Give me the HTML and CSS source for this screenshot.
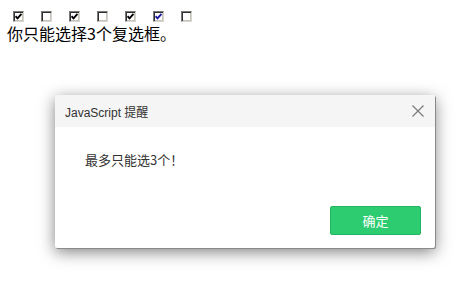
FILE: index.html
```html
<!DOCTYPE html>
<html lang="zh">
<head>
<meta charset="utf-8">
<link rel="stylesheet" href="styles.css">
</head>
<body>
<div class="boxes">
  <span class="cb"><svg viewBox="0 0 7 7" width="7" height="7"><polyline points="0.5,3.2 2.5,5.3 6.5,1" /></svg></span>
  <span class="cb"></span>
  <span class="cb"><svg viewBox="0 0 7 7" width="7" height="7"><polyline points="0.5,3.2 2.5,5.3 6.5,1" /></svg></span>
  <span class="cb"></span>
  <span class="cb"><svg viewBox="0 0 7 7" width="7" height="7"><polyline points="0.5,3.2 2.5,5.3 6.5,1" /></svg></span>
  <span class="cb blue"><svg viewBox="0 0 7 7" width="7" height="7"><polyline points="0.5,3.2 2.5,5.3 6.5,1" /></svg></span>
  <span class="cb"></span>
</div>
<div class="hint">你只能选择3个复选框。</div>

<div class="dialog">
  <div class="dlg-head">
    <span class="dlg-title">JavaScript 提醒</span>
    <svg class="dlg-close" viewBox="0 0 12 12" width="12" height="12"><path d="M0.5 0.5 L11.5 11.5 M11.5 0.5 L0.5 11.5"/></svg>
  </div>
  <div class="dlg-body">最多只能选3个！</div>
  <div class="dlg-foot"><button class="ok">确定</button></div>
</div>
</body>
</html>
```
FILE: styles.css
```css
html, body { margin: 0; padding: 0; background: #fff; }
body {
  padding: 8px;
  font-family: "Noto Sans CJK SC", "Noto Sans", sans-serif;
  color: #000;
  width: 472px;
  height: 287px;
  box-sizing: border-box;
  position: relative;
  overflow: hidden;
}
.boxes {
  display: flex;
  gap: 17px;
  padding-left: 5px;
  padding-top: 3px;
  height: 12px;
}
.cb {
  width: 11px;
  height: 11px;
  box-sizing: border-box;
  border-style: solid;
  border-width: 1px;
  border-color: #7a7a7a #d8d5ce #d8d5ce #7a7a7a;
  box-shadow: inset 1px 1px 0 #303030, inset -1px -1px 0 #c8c4bc;
  background: #fff;
  display: flex;
  align-items: center;
  justify-content: center;
}
.cb svg { display: block; fill: none; stroke: #000; stroke-width: 1.9; }
.cb.blue svg { stroke: #1a1a9c; }
.hint {
  font-size: 16px;
  line-height: 18px;
  margin-top: 1px;
  margin-left: -1px;
}
.dialog {
  position: absolute;
  left: 55px;
  top: 95px;
  width: 380px;
  height: 153px;
  background: #fff;
  border-radius: 2px;
  box-shadow: 1px 1px 0 #8a8a8a, 0 4px 16px rgba(0,0,0,0.5);
  display: flex;
  flex-direction: column;
  overflow: hidden;
}
.dlg-head {
  height: 32px;
  background: #f5f5f5;
  display: flex;
  align-items: center;
  justify-content: space-between;
  padding: 0 11px 0 10px;
  flex: none;
}
.dlg-title {
  font-size: 12px;
  color: #333;
  font-family: "Liberation Sans", "Noto Sans CJK SC", sans-serif;
}
.dlg-close { display: block; fill: none; stroke: #7a7a7a; stroke-width: 1.2; }
.dlg-body {
  padding: 24px 30px 0;
  font-size: 13px;
  line-height: 18px;
  color: #333;
  height: 55px;
  flex: none;
}
.dlg-foot {
  display: flex;
  justify-content: flex-end;
  padding-right: 14px;
}
.ok {
  width: 91px;
  height: 29px;
  background: #2ecc71;
  border: 1px solid #22b45f;
  border-radius: 2px;
  color: #fff;
  font-size: 13px;
  font-family: "Noto Sans CJK SC", sans-serif;
  padding: 0;
}
```
